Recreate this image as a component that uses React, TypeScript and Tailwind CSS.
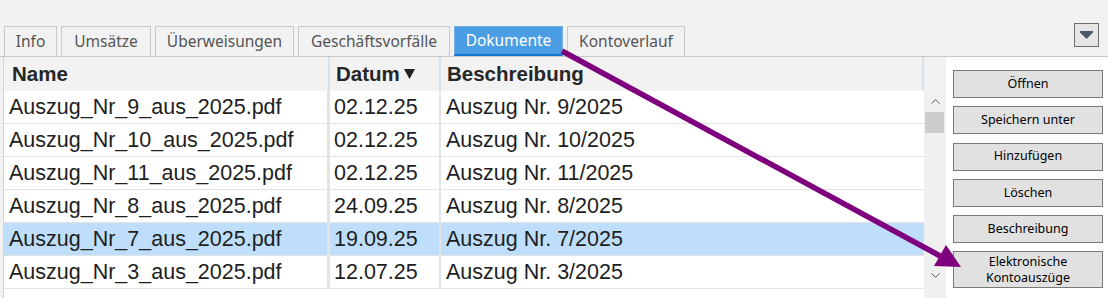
import { ChevronDown, ChevronUp } from "lucide-react";

// Dokumente tab of the account view, with the annotation arrow on top.

const tabs = [
  { label: "Info", w: "w-[53px]" },
  { label: "Umsätze", w: "w-[90px]" },
  { label: "Überweisungen", w: "w-[139px]" },
  { label: "Geschäftsvorfälle", w: "w-[152px]" },
  { label: "Dokumente", w: "w-[109px]", active: true },
  { label: "Kontoverlauf", w: "w-[118px]" },
];

const rows = [
  { name: "Auszug_Nr_9_aus_2025.pdf", date: "02.12.25", desc: "Auszug Nr. 9/2025" },
  { name: "Auszug_Nr_10_aus_2025.pdf", date: "02.12.25", desc: "Auszug Nr. 10/2025" },
  { name: "Auszug_Nr_11_aus_2025.pdf", date: "02.12.25", desc: "Auszug Nr. 11/2025" },
  { name: "Auszug_Nr_8_aus_2025.pdf", date: "24.09.25", desc: "Auszug Nr. 8/2025" },
  { name: "Auszug_Nr_7_aus_2025.pdf", date: "19.09.25", desc: "Auszug Nr. 7/2025", selected: true },
  { name: "Auszug_Nr_3_aus_2025.pdf", date: "12.07.25", desc: "Auszug Nr. 3/2025" },
];

const buttons = ["Öffnen", "Speichern unter", "Hinzufügen", "Löschen", "Beschreibung"];

const uiFont = "font-['Noto_Sans','Open_Sans',sans-serif]";
const gridFont = "font-['Liberation_Sans',Arial,sans-serif]";

export default function App() {
  return (
    <div className="relative w-[1108px] h-[298px] overflow-hidden bg-[#f2f2f2]">
      {/* tab strip */}
      <div className="flex h-[57px] items-end border-b border-[#c8c8c8] pl-[4px] pr-[9px]">
        <div className="flex gap-[4px]">
          {tabs.map((t) => (
            <div
              key={t.label}
              className={`${t.w} ${uiFont} flex h-[30px] items-center justify-center text-[15.5px] ${
                t.active
                  ? "border border-b-2 border-[#74b0e6] border-b-[#1677d2] bg-[#4c9ee4] text-white"
                  : "border border-b-0 border-[#c9c9c9] bg-[#f2f2f2] text-[#555]"
              }`}
            >
              {t.label}
            </div>
          ))}
        </div>
        <div className="ml-auto mb-[9px] flex h-[24px] w-[25px] items-center justify-center border border-[#6f6f6f] bg-[#e6e6e6]">
          <svg width="13" height="8" viewBox="0 0 13 8">
            <path d="M0 0h13v1.5L6.5 8 0 1.5z" fill="#4b5867" />
          </svg>
        </div>
      </div>

      <div className="flex h-[241px]">
        {/* document table */}
        <div className="ml-[3px] flex border-l border-[#d2d2d2] bg-white">
          <div className={`${gridFont} w-[920px]`}>
            <div className="flex h-[34px] items-center bg-[#f2f2f2] text-[20.5px] font-bold text-[#262626]">
              <div className="flex h-full w-[326px] items-center border-r-2 border-[#dbe3ea] pl-[8px]">Name</div>
              <div className="flex h-full w-[111px] items-center border-r-2 border-[#dbe3ea] pl-[6px]">
                Datum
                <svg className="ml-[4px]" width="11" height="10" viewBox="0 0 11 10">
                  <path d="M0 0h11L5.5 10z" fill="#222" />
                </svg>
              </div>
              <div className="flex h-full w-[483px] items-center border-r-2 border-[#dbe3ea] pl-[6px]">Beschreibung</div>
            </div>
            {rows.map((r) => (
              <div
                key={r.name}
                className={`flex h-[33px] border-b border-[#e3e3e3] text-[21.5px] text-[#1e1e1e] ${
                  r.selected ? "bg-[#bfdefb]" : "bg-white"
                }`}
              >
                <div className="flex w-[326px] items-center border-r-[3px] border-[#e4e4e4] pl-[5px]">{r.name}</div>
                <div className="flex w-[111px] items-center border-r-[2px] border-[#e4e4e4] pl-[4px]">{r.date}</div>
                <div className="flex w-[483px] items-center pl-[5px]">{r.desc}</div>
              </div>
            ))}
          </div>
          <div className="flex w-[22px] flex-col bg-[#f0f0f0]">
            <div className="h-[34px] bg-[#f2f2f2]" />
            <div className="flex h-[21px] items-center justify-center">
              <ChevronUp size={15} strokeWidth={1.6} className="text-[#555]" />
            </div>
            <div className="mx-[1px] h-[21px] w-[19px] bg-[#cdcdcd]" />
            <div className="flex-1" />
            <div className="mb-[12px] flex h-[21px] items-center justify-center">
              <ChevronDown size={15} strokeWidth={1.6} className="text-[#555]" />
            </div>
          </div>
        </div>

        {/* action buttons */}
        <div className={`${uiFont} flex flex-1 flex-col gap-[8.3px] bg-white pl-[7px] pt-[13px]`}>
          {buttons.map((b) => (
            <div
              key={b}
              className="flex h-[28px] w-[150px] items-center justify-center border border-[#7a7a7a] bg-[#e1e1e1] text-[12.5px] text-black"
            >
              {b}
            </div>
          ))}
          <div className="flex h-[37px] w-[150px] flex-col items-center justify-center border border-[#7a7a7a] bg-[#e1e1e1] text-[12.5px] leading-[16px] text-black">
            <span>Elektronische</span>
            <span>Kontoauszüge</span>
          </div>
        </div>
      </div>

      {/* annotation arrow */}
      <svg className="pointer-events-none absolute left-0 top-0" width="1108" height="298">
        <line x1="562" y1="51" x2="942" y2="257" stroke="#7f007f" strokeWidth="5.5" />
        <polygon points="961,267 934,266 946,245" fill="#7f007f" />
      </svg>
    </div>
  );
}
